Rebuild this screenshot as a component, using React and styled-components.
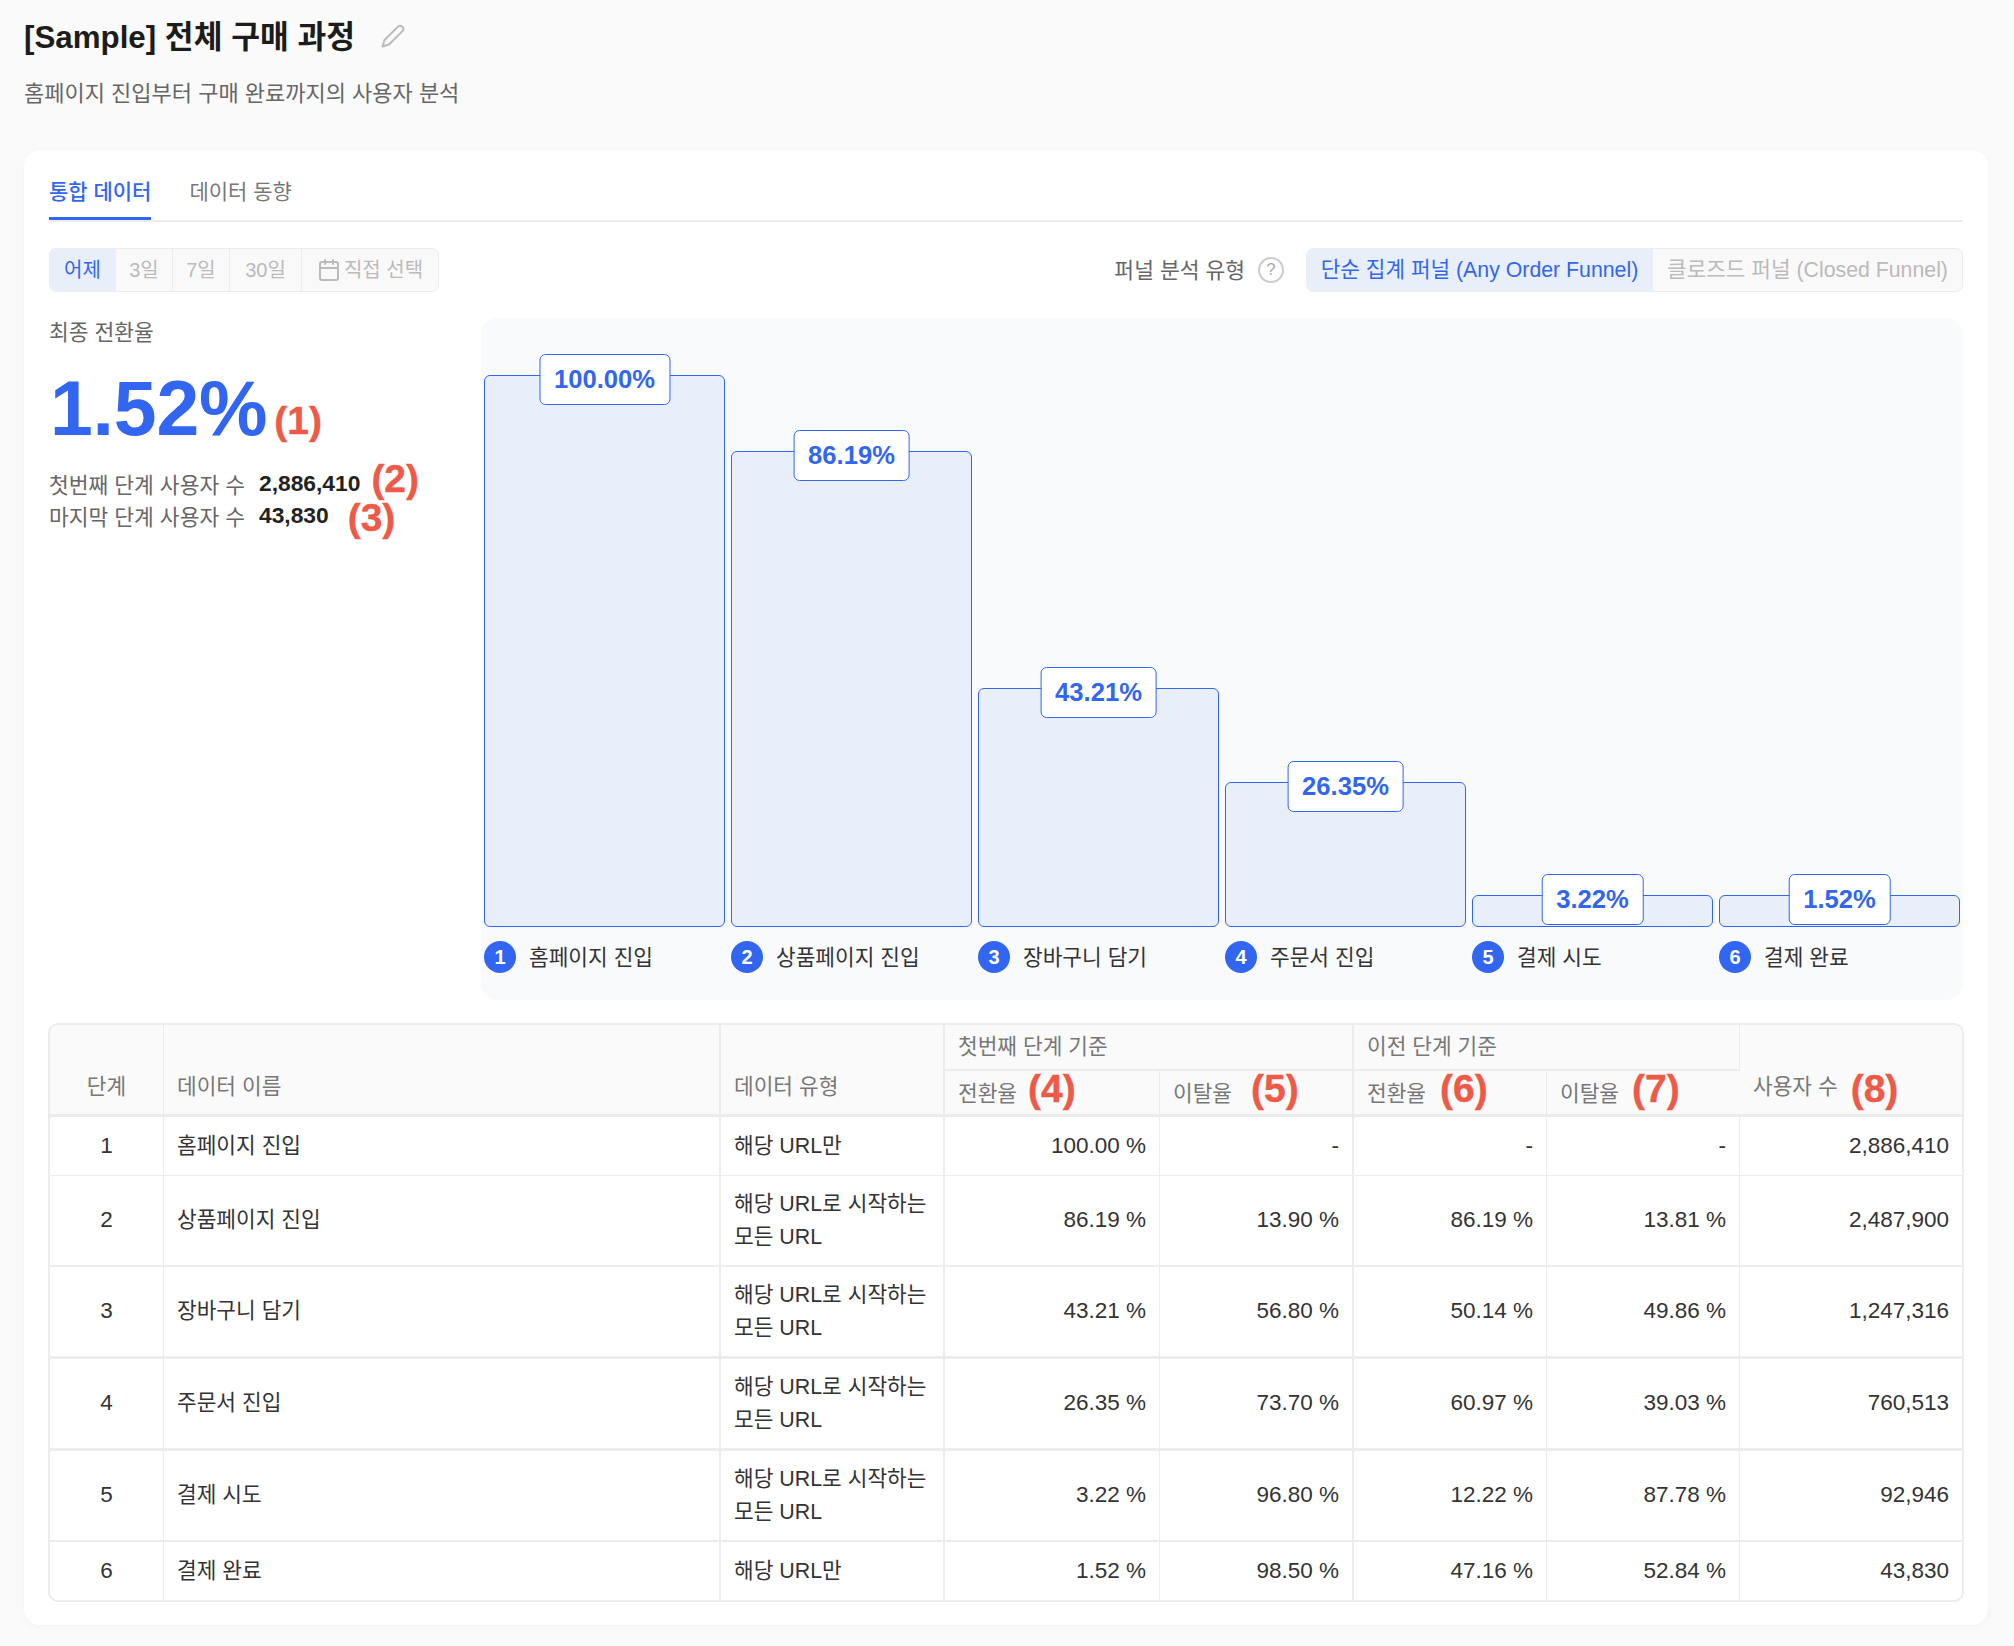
import React from "react";
import styled, { createGlobalStyle } from "styled-components";
import { Calendar } from "lucide-react";

const BLUE = "#3366f0";
const RED = "#ee5a47";
const LINE = "#ececec";

const GlobalStyle = createGlobalStyle`
  html, body {
    margin: 0;
    background: #fafafa;
    font-family: "Liberation Sans", "Noto Sans CJK KR", sans-serif;
    color: #333;
  }
  * { box-sizing: border-box; }
`;

const Page = styled.div`
  width: 2014px;
  padding: 14px 26px 21px 24px;
`;

const TitleRow = styled.div`
  display: flex;
  align-items: center;
  gap: 26px;
  height: 44px;
`;

const Title = styled.h1`
  margin: -4px 0 0;
  font-size: 31.3px;
  font-weight: 700;
  color: #1c1c1c;
`;

const Subtitle = styled.p`
  margin: 19px 0 39px;
  font-size: 22px;
  line-height: 34px;
  color: #666;
`;

const Card = styled.div`
  background: #fff;
  border-radius: 16px;
  padding: 24px 25px 23px;
  box-shadow: 0 2px 8px rgba(0, 0, 0, 0.03);
`;

const Tabs = styled.div`
  display: flex;
  gap: 38px;
  border-bottom: 2px solid #eee;
`;

const Tab = styled.div`
  font-size: 21px;
  line-height: 34px;
  padding-top: 1px;
  height: 46px;
  font-weight: ${(p) => (p.$active ? 500 : 400)};
  color: ${(p) => (p.$active ? BLUE : "#777")};
  border-bottom: 3px solid ${(p) => (p.$active ? BLUE : "transparent")};
`;

const Controls = styled.div`
  display: flex;
  justify-content: space-between;
  align-items: center;
  margin-top: 26px;
`;

const Segments = styled.div`
  display: flex;
  height: 44px;
  border: 1px solid ${LINE};
  border-radius: 7px;
  overflow: hidden;
  background: #f9f9f9;
`;

const Segment = styled.div`
  display: flex;
  align-items: center;
  justify-content: center;
  gap: 3px;
  width: ${(p) => p.$w}px;
  padding-bottom: ${(p) => (p.$size ? 5 : 3)}px;
  font-size: ${(p) => p.$size || 20}px;
  color: ${(p) => (p.$active ? BLUE : "#bbb")};
  background: ${(p) => (p.$active ? "#e8effb" : "transparent")};
  border-right: 1px solid ${(p) => (p.$active ? "transparent" : LINE)};
  &:last-child { border-right: 0; }
  svg { margin-top: 3px; }
`;

const FunnelType = styled.div`
  display: flex;
  align-items: center;
`;

const FunnelLabel = styled.span`
  margin-top: -3px;
  font-size: 21.5px;
  color: #666;
`;

const Help = styled.span`
  display: flex;
  align-items: center;
  justify-content: center;
  width: 26px;
  height: 26px;
  margin: 0 22px 0 13px;
  border: 2px solid #cbcbcb;
  border-radius: 50%;
  font-size: 17px;
  color: #aaa;
`;

const Body = styled.div`
  display: flex;
  margin-top: 26px;
`;

const Summary = styled.div`
  width: 432px;
`;

const SummaryLabel = styled.div`
  margin-top: 1px;
  font-size: 21.5px;
  line-height: 28px;
  color: #666;
`;

const RateRow = styled.div`
  display: flex;
  align-items: baseline;
  margin-top: 17px;
  height: 88px;
  padding-left: 1px;
`;

const Rate = styled.span`
  font-size: 77px;
  font-weight: 700;
  letter-spacing: -0.2px;
  line-height: 88px;
  color: ${BLUE};
`;

const Mark = styled.span`
  display: inline-block;
  font-size: 39px;
  font-weight: 700;
  line-height: 0;
  color: ${RED};
  -webkit-text-stroke: 0.4px ${RED};
  margin-left: ${(p) => p.$gap || 0}px;
  position: relative;
  top: ${(p) => p.$top || 0}px;
`;

const StatList = styled.div`
  margin-top: 15px;
`;

const Stat = styled.div`
  display: flex;
  align-items: center;
  height: 32px;
  font-size: 21.5px;
  color: #666;
`;

const StatValue = styled.strong`
  margin-left: 14px;
  font-size: 22.8px;
  color: #222;
`;

const Chart = styled.div`
  flex: 1;
  height: 682px;
  padding: 0 3px;
  border-radius: 16px;
  background: #f9fafc;
`;

const Bars = styled.div`
  display: grid;
  grid-template-columns: repeat(6, 1fr);
  column-gap: 6px;
  align-items: end;
  height: 609px;
`;

const Bar = styled.div`
  position: relative;
  background: #e8effb;
  border: 1.5px solid ${BLUE};
  border-radius: 6px;
`;

const Badge = styled.div`
  position: absolute;
  top: -22px;
  left: 50%;
  transform: translateX(-50%);
  height: 51px;
  padding: 0 14px;
  display: flex;
  align-items: center;
  background: #fff;
  border: 1.5px solid ${BLUE};
  border-radius: 6px;
  font-size: 25.6px;
  font-weight: 700;
  color: ${BLUE};
`;

const Labels = styled.div`
  display: grid;
  grid-template-columns: repeat(6, 1fr);
  column-gap: 6px;
  margin-top: 14px;
`;

const Step = styled.div`
  display: flex;
  align-items: center;
  gap: 13px;
  font-size: 21.4px;
  color: #333;
`;

const StepName = styled.span`
  margin-top: -4px;
`;

const StepNo = styled.span`
  display: flex;
  align-items: center;
  justify-content: center;
  width: 32px;
  height: 32px;
  border-radius: 50%;
  background: ${BLUE};
  color: #fff;
  font-size: 20px;
  font-weight: 700;
`;

const TableWrap = styled.div`
  margin: 23px -1px 0;
  border: 2px solid ${LINE};
  border-radius: 10px;
  overflow: hidden;
`;

const Table = styled.table`
  width: 100%;
  table-layout: fixed;
  border-collapse: separate;
  border-spacing: 0;
`;

const Col = styled.col`
  width: ${(p) => p.$w}px;
`;

const Th = styled.th`
  height: 46px;
  padding: 0 13px ${(p) => (p.$sub ? 2 : 0)}px;
  font-size: 21.4px;
  font-weight: 400;
  text-align: ${(p) => (p.$center ? "center" : "left")};
  vertical-align: ${(p) => (p.$low ? "bottom" : "middle")};
  color: #777;
  background: #fafafa;
  white-space: nowrap;
  border-right: ${(p) => (p.$thick ? 2 : 1)}px solid ${LINE};
  border-bottom: ${(p) => (p.$bottom ? 3 : 2)}px solid ${LINE};
  &:last-child { border-right: 0; }
`;

const TopText = styled.span`
  position: relative;
  top: -3px;
`;

const LowText = styled.span`
  display: block;
  padding-bottom: 14px;
`;

const Td = styled.td`
  height: 59px;
  padding: 12px 13px;
  font-size: ${(p) => (p.$num ? 22.5 : 21.4)}px;
  line-height: 32.5px;
  color: #333;
  text-align: ${(p) => p.$align || "left"};
  border-right: ${(p) => (p.$thick ? 2 : 1)}px solid ${LINE};
  border-bottom: ${(p) => p.$rowLine}px solid ${LINE};
  &:last-child { border-right: 0; }
  tr:last-child > & {
    height: 58px;
    border-bottom: 0;
  }
`;

const PencilIcon = () => (
  <svg width="24" height="24" viewBox="0 0 24 24" fill="none" stroke="#bbb" strokeWidth="2" strokeLinejoin="round">
    <path d="M1.5 22.5 3.5 16 17 2.6a3.2 3.2 0 0 1 4.5 4.5L8 20.5Z" />
  </svg>
);

const steps = [
  { name: "홈페이지 진입", type: "해당 URL만", rate: "100.00%", h: 100, first: "100.00 %", firstOut: "-", prev: "-", prevOut: "-", users: "2,886,410", line: 1 },
  { name: "상품페이지 진입", type: "해당 URL로 시작하는 모든 URL", rate: "86.19%", h: 86.19, first: "86.19 %", firstOut: "13.90 %", prev: "86.19 %", prevOut: "13.81 %", users: "2,487,900", line: 2 },
  { name: "장바구니 담기", type: "해당 URL로 시작하는 모든 URL", rate: "43.21%", h: 43.21, first: "43.21 %", firstOut: "56.80 %", prev: "50.14 %", prevOut: "49.86 %", users: "1,247,316", line: 3 },
  { name: "주문서 진입", type: "해당 URL로 시작하는 모든 URL", rate: "26.35%", h: 26.35, first: "26.35 %", firstOut: "73.70 %", prev: "60.97 %", prevOut: "39.03 %", users: "760,513", line: 3 },
  { name: "결제 시도", type: "해당 URL로 시작하는 모든 URL", rate: "3.22%", h: 3.22, first: "3.22 %", firstOut: "96.80 %", prev: "12.22 %", prevOut: "87.78 %", users: "92,946", line: 2 },
  { name: "결제 완료", type: "해당 URL만", rate: "1.52%", h: 1.52, first: "1.52 %", firstOut: "98.50 %", prev: "47.16 %", prevOut: "52.84 %", users: "43,830", line: 1 },
];

const FULL_BAR = 552;
const colWidths = [114, 557, 224, 215, 194, 193, 193, 222];

export default function App() {
  return (
    <Page>
      <GlobalStyle />
      <TitleRow>
        <Title>[Sample] 전체 구매 과정</Title>
        <PencilIcon />
      </TitleRow>
      <Subtitle>홈페이지 진입부터 구매 완료까지의 사용자 분석</Subtitle>

      <Card>
        <Tabs>
          <Tab $active>통합 데이터</Tab>
          <Tab>데이터 동향</Tab>
        </Tabs>

        <Controls>
          <Segments>
            <Segment $w={66} $active>어제</Segment>
            <Segment $w={57}>3일</Segment>
            <Segment $w={57}>7일</Segment>
            <Segment $w={72}>30일</Segment>
            <Segment $w={136}>
              <Calendar size={24} strokeWidth={2} />
              직접 선택
            </Segment>
          </Segments>
          <FunnelType>
            <FunnelLabel>퍼널 분석 유형</FunnelLabel>
            <Help>?</Help>
            <Segments>
              <Segment $w={346} $size={21.3} $active>단순 집계 퍼널 (Any Order Funnel)</Segment>
              <Segment $w={309} $size={21.3}>클로즈드 퍼널 (Closed Funnel)</Segment>
            </Segments>
          </FunnelType>
        </Controls>

        <Body>
          <Summary>
            <SummaryLabel>최종 전환율</SummaryLabel>
            <RateRow>
              <Rate>1.52%</Rate>
              <Mark $gap={7} $top={-1}>(1)</Mark>
            </RateRow>
            <StatList>
              <Stat>
                첫번째 단계 사용자 수<StatValue>2,886,410</StatValue>
                <Mark $gap={11} $top={-4}>(2)</Mark>
              </Stat>
              <Stat>
                마지막 단계 사용자 수<StatValue>43,830</StatValue>
                <Mark $gap={19} $top={3}>(3)</Mark>
              </Stat>
            </StatList>
          </Summary>

          <Chart>
            <Bars>
              {steps.map((s) => (
                <Bar key={s.name} style={{ height: Math.max(32, (FULL_BAR * s.h) / 100) }}>
                  <Badge>{s.rate}</Badge>
                </Bar>
              ))}
            </Bars>
            <Labels>
              {steps.map((s, i) => (
                <Step key={s.name}>
                  <StepNo>{i + 1}</StepNo>
                  <StepName>{s.name}</StepName>
                </Step>
              ))}
            </Labels>
          </Chart>
        </Body>

        <TableWrap>
          <Table>
            <colgroup>
              {colWidths.map((w, i) => (
                <Col key={i} $w={w} />
              ))}
            </colgroup>
            <thead>
              <tr>
                <Th rowSpan={2} $center $low $bottom><LowText>단계</LowText></Th>
                <Th rowSpan={2} $low $thick $bottom><LowText>데이터 이름</LowText></Th>
                <Th rowSpan={2} $low $thick $bottom><LowText>데이터 유형</LowText></Th>
                <Th colSpan={2} $thick><TopText>첫번째 단계 기준</TopText></Th>
                <Th colSpan={2}><TopText>이전 단계 기준</TopText></Th>
                <Th rowSpan={2} $low $bottom>
                  <LowText>사용자 수<Mark $gap={13} $top={8}>(8)</Mark></LowText>
                </Th>
              </tr>
              <tr>
                <Th $sub $bottom>전환율<Mark $gap={11} $top={1}>(4)</Mark></Th>
                <Th $sub $bottom $thick>이탈율<Mark $gap={19} $top={1}>(5)</Mark></Th>
                <Th $sub $bottom>전환율<Mark $gap={14} $top={1}>(6)</Mark></Th>
                <Th $sub $bottom>이탈율<Mark $gap={13} $top={1}>(7)</Mark></Th>
              </tr>
            </thead>
            <tbody>
              {steps.map((s, i) => (
                <tr key={s.name}>
                  <Td $rowLine={s.line} $align="center" $num>{i + 1}</Td>
                  <Td $rowLine={s.line} $thick>{s.name}</Td>
                  <Td $rowLine={s.line} $thick>{s.type}</Td>
                  <Td $rowLine={s.line} $num $align="right">{s.first}</Td>
                  <Td $rowLine={s.line} $num $align="right" $thick>{s.firstOut}</Td>
                  <Td $rowLine={s.line} $num $align="right">{s.prev}</Td>
                  <Td $rowLine={s.line} $num $align="right">{s.prevOut}</Td>
                  <Td $rowLine={s.line} $num $align="right">{s.users}</Td>
                </tr>
              ))}
            </tbody>
          </Table>
        </TableWrap>
      </Card>
    </Page>
  );
}
